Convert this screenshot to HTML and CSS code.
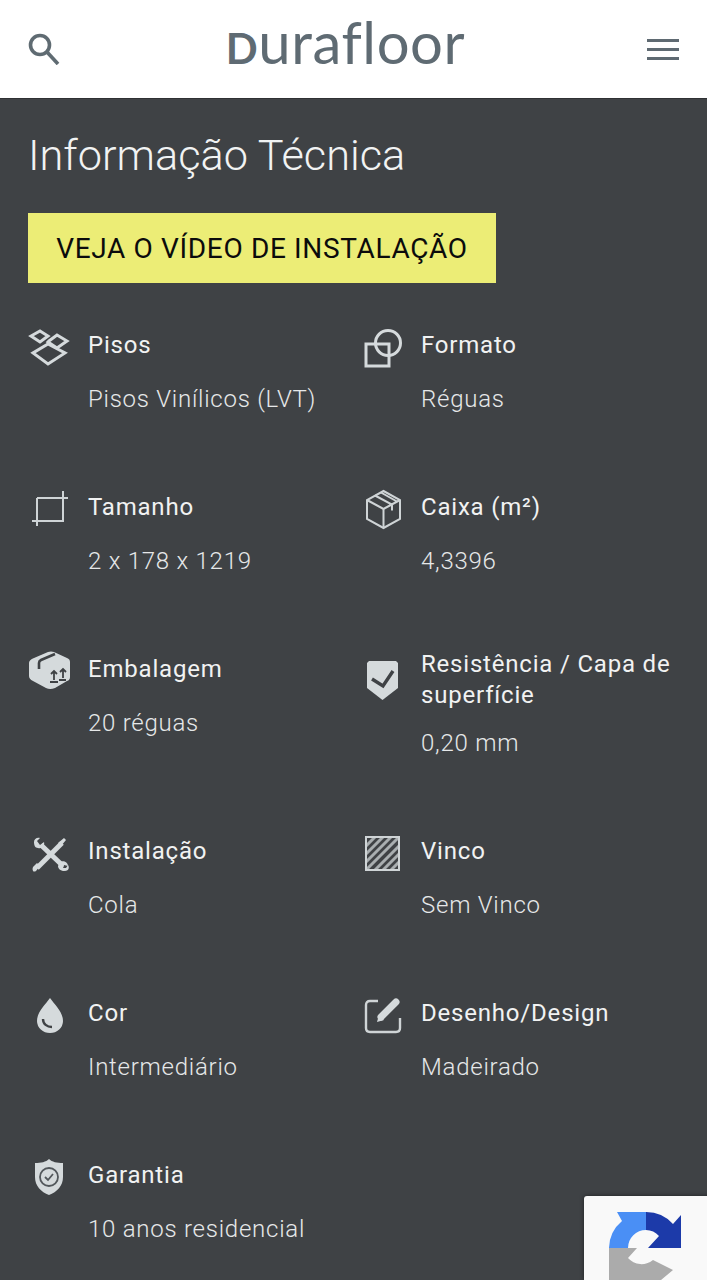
FILE: index.html
```html
<!DOCTYPE html>
<html lang="pt">
<head>
<meta charset="utf-8">
<title>Informação Técnica</title>
<link rel="stylesheet" href="styles.css">
</head>
<body>
<header class="topbar">
  <svg class="search" viewBox="0 0 32 32"><circle cx="12" cy="12" r="9.500"/><path d="M19 19l11 12"/></svg>
  <div class="logo"><span class="logo-d">D</span>urafloor</div>
  <div class="burger"><span></span><span></span><span></span></div>
</header>
<main class="content">
  <h1 class="title">Informação Técnica</h1>
  <a class="cta">VEJA O VÍDEO DE INSTALAÇÃO</a>
  <section class="specs">
    <div class="spec">
      <svg class="ico" viewBox="0 0 44 44"><g class="ln3"><path d="M12 7l8 5-8 6-9-6z"/><path d="M29 11l10 6-10 7-9-6 1-1z"/><path d="M20 20l17 9-17 11-15-11z"/></g></svg>
      <div class="label">Pisos</div>
      <div class="value">Pisos Vinílicos (LVT)</div>
    </div>
    <div class="spec">
      <svg class="ico" viewBox="0 0 44 44"><g class="ln3"><rect x="5" y="20" width="23" height="22"/><circle cx="27" cy="19" r="12.500"/></g></svg>
      <div class="label">Formato</div>
      <div class="value">Réguas</div>
    </div>
    <div class="spec">
      <svg class="ico" viewBox="0 0 44 44"><g class="ln2"><path d="M9 12v28M4 35h31V5M9 12h31"/></g></svg>
      <div class="label">Tamanho</div>
      <div class="value">2 x 178 x 1219</div>
    </div>
    <div class="spec">
      <svg class="ico" viewBox="0 0 44 44"><g class="ln2"><path d="M22.500 5L39 14v19l-16.500 9L6 33V14z"/><path d="M6 14l16.500 9L39 14M22.500 23v19M14 9.500l17 9v6M20 6.500l16 9"/></g></svg>
      <div class="label">Caixa (m²)</div>
      <div class="value">4,3396</div>
    </div>
    <div class="spec">
      <svg class="ico" viewBox="0 0 44 44"><path class="fill" d="M6 10L20 4q3-1 6 0l13 6q3 1 3 4v15q0 3-3 4L27 40q-5 2-9 0L5 33q-4-2-4-5V15q0-3 5-5z"/><path class="cut" d="M11 21v-6q0-2 2-3L27 6"/><path class="cut2" d="M26 32v-9m-3 3l3-3 3 3M35 30v-9m-3 3l3-3 3 3M22 34h8M31 32h7"/></svg>
      <div class="label">Embalagem</div>
      <div class="value">20 réguas</div>
    </div>
    <div class="spec">
      <svg class="ico" viewBox="0 0 44 44"><path class="fill" d="M8 3h27l2 2v25L21.500 42 6 30V5z"/><path class="cut3" d="M11 21l11 7 10-15"/></svg>
      <div class="label">Resistência / Capa de superfície</div>
      <div class="value">0,20 mm</div>
    </div>
    <div class="spec">
      <svg class="ico" viewBox="0 0 44 44"><path class="tool" d="M9 38L34 13"/><path class="fill" d="M30 13l6-5 2 2-5 6zM5 37l4-4 3 3-4 5q-2 1-3 0-1-2 0-4z"/><path class="tool" d="M13 15l21 20"/><path class="fill" d="M6 12c0-3 3-5 6-4l-3 3 3 4 4-3c1 4-2 7-6 6-3 0-4-3-4-6zM37 41c-3 0-5-3-4-6l3-1-1 4 3 0 2-3c2 3 0 6-3 6z"/><path class="fill" d="M32 32c3-2 8 0 8 4l-4-1-1 3 2 3c-4 0-7-2-7-5z"/></svg>
      <div class="label">Instalação</div>
      <div class="value">Cola</div>
    </div>
    <div class="spec">
      <svg class="ico" viewBox="0 0 44 44"><g class="hatch"><path d="M5 16L14 7M5 24L22 7M5 32L30 7M6 39L38 7M14 40L38 16M22 40L38 24M30 40L38 32"/></g><g class="ln2"><rect x="5" y="7" width="33" height="33"/></g></svg>
      <div class="label">Vinco</div>
      <div class="value">Sem Vinco</div>
    </div>
    <div class="spec">
      <svg class="ico" viewBox="0 0 44 44"><path class="fill" d="M22 6c5 7 13 14 13 23a13 12 0 0 1-26 0C9 20 17 13 22 6z"/><path class="cut4" d="M15 27c0 5 4 8 9 8"/></svg>
      <div class="label">Cor</div>
      <div class="value">Intermediário</div>
    </div>
    <div class="spec">
      <svg class="ico" viewBox="0 0 44 44"><g class="ln2b"><path d="M17 9H9q-4 0-4 4v23q0 4 4 4h26q4 0 4-4V26"/></g><path class="pencil" d="M20 25l15-15"/><path class="fill" d="M16 30l2-7 5 5z"/></svg>
      <div class="label">Desenho/Design</div>
      <div class="value">Madeirado</div>
    </div>
    <div class="spec">
      <svg class="ico" viewBox="0 0 44 44"><path class="fill" d="M21 5c3 3 8 4 14 4v14c0 9-6 15-14 18C13 38 7 32 7 23V9c6 0 11-1 14-4z"/><circle class="cut5" cx="21" cy="23" r="9"/><path class="cut5" d="M17 23l3 3 5-6"/></svg>
      <div class="label">Garantia</div>
      <div class="value">10 anos residencial</div>
    </div>
  </section>
</main>
<aside class="recaptcha">
  <svg class="rc-logo" viewBox="584 1196 123 84">
    <path class="rc-grey" d="M609 1248h28l-9 10a18 18 0 0 0 25 2l20 10-12 10h-52z"/>
    <path class="rc-light" d="M617 1212h29v18a18 18 0 0 0-18 18h-19a36 36 0 0 1 13-27z"/>
    <path class="rc-dark" d="M646 1212a36 36 0 0 1 27 12l8-9v33h-33l11-12a18 18 0 0 0-13-6z"/>
  </svg>
</aside>
</body>
</html>
```

FILE: styles.css
```css
* { box-sizing: border-box; }
html, body {
  margin: 0;
  height: 1280px;
  overflow: hidden;
}
body {
  background: #3f4245;
  font-family: Roboto, "Liberation Sans", sans-serif;
  color: #f1f2f2;
}
.topbar {
  height: 99px;
  background: #fff;
  display: flex;
  align-items: center;
  justify-content: space-between;
  padding: 0 28px;
  border-bottom: 1px solid #2f3133;
}
.search {
  width: 32px;
  height: 32px;
  fill: none;
  stroke: #5f6b72;
  stroke-width: 3.6;
}
.logo {
  font-family: Lato, sans-serif;
  font-weight: 400;
  font-size: 58px;
  line-height: 60px;
  letter-spacing: 0.6px;
  color: #5f6b73;
  white-space: nowrap;
  margin-right: 16px;
  padding-bottom: 8px;
}
.logo-d { font-size: 42px; font-weight: 700; }
.burger {
  width: 32px;
  display: flex;
  flex-direction: column;
  gap: 6px;
}
.burger span {
  height: 3px;
  background: #5f6a72;
}
.content { padding: 0 28px; }
.title {
  margin: 28px 0 0;
  font-size: 43.3px;
  font-weight: 300;
  line-height: 58px;
  color: #f1f3f3;
}
.cta {
  display: block;
  width: 468px;
  height: 70px;
  margin-top: 28px;
  background: #eced76;
  color: #0b0b0c;
  font-size: 28px;
  font-weight: 450;
  line-height: 71px;
  letter-spacing: 0.65px;
  text-align: center;
  white-space: nowrap;
}
.specs {
  display: grid;
  grid-template-columns: 333px 1fr;
  margin-top: 42px;
  row-gap: 72px;
  align-items: start;
}
.spec {
  display: grid;
  grid-template-columns: 60px 1fr;
  row-gap: 18px;
  align-items: center;
}
.ico {
  width: 44px;
  height: 44px;
  margin: -2px 0;
  display: block;
}
.label {
  font-size: 24px;
  font-weight: 400;
  line-height: 30.5px;
  min-height: 41px;
  letter-spacing: 0.8px;
  display: flex;
  align-items: center;
}
.value {
  grid-column: 2;
  font-size: 24px;
  font-weight: 300;
  line-height: 31px;
  letter-spacing: 0.75px;
  color: #e6e8e9;
}
.ln3 { fill: none; stroke: #d5dadc; stroke-width: 3; }
.ln2 { fill: none; stroke: #cfd4d6; stroke-width: 2; }
.ln2b { fill: none; stroke: #cfd4d6; stroke-width: 2.4; }
.hatch { fill: none; stroke: #a9aeb0; stroke-width: 3; }
.fill { fill: #d5dadc; }
.tool { fill: none; stroke: #d5dadc; stroke-width: 5; }
.pencil { fill: none; stroke: #d5dadc; stroke-width: 7; stroke-linecap: round; }
.cut, .cut2, .cut3, .cut4, .cut5 { fill: none; stroke: #3f4245; }
.cut { stroke-width: 2.6; }
.cut2 { stroke-width: 1.8; }
.cut3 { stroke-width: 3.4; }
.cut4 { stroke-width: 2.4; }
.cut5 { stroke-width: 1.8; stroke: #52575b; }
.recaptcha {
  position: fixed;
  left: 584px;
  top: 1196px;
  width: 140px;
  height: 84px;
  background: #f9f9f9;
  border-radius: 3px 0 0 0;
  box-shadow: 0 0 4px rgba(0, 0, 0, 0.5);
}
.rc-logo {
  display: block;
  width: 123px;
  height: 84px;
}
.rc-grey { fill: #ababab; }
.rc-light { fill: #4a8ff5; }
.rc-dark { fill: #1c3aa9; }
```
